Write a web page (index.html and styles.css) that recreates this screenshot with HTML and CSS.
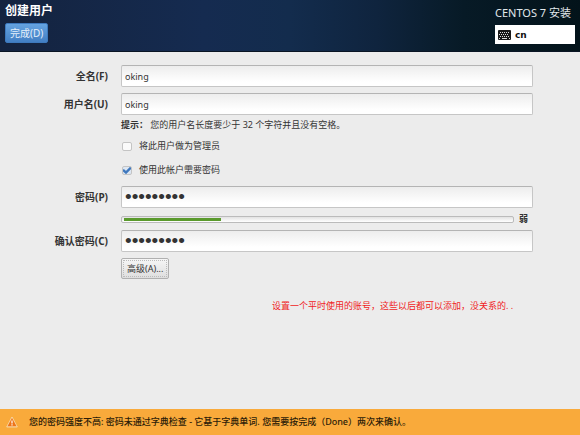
FILE: index.html
```html
<!DOCTYPE html>
<html lang="zh-CN">
<head>
    <meta charset="utf-8">
    <meta name="viewport" content="width=device-width, initial-scale=1">
    <title>创建用户</title>
    <link rel="stylesheet" href="styles.css">
</head>

<body>
    <header class="header">
        <div class="header-side">
            <h1>创建用户</h1>
            <button type="button" class="done">完成(D)</button>
        </div>
        <div class="header-side product">
            <span>CENTOS 7 安装</span>
            <button type="button" class="keyboard">
                <svg width="13" height="10" viewBox="0 0 13 10" aria-hidden="true">
                    <rect width="13" height="10" rx="1" fill="#1a1a1a"/>
                    <path d="M2 2.500h10M1 4.500h10M2 6.500h10" stroke="#ddd" stroke-dasharray="1 1"/>
                    <path d="M1 8.500h1M4 8.500h5M11 8.500h1" stroke="#ddd"/>
                </svg>
                cn
            </button>
        </div>
    </header>

    <main>
        <form class="form" action="#">
            <label class="name" for="fullname">全名(F)</label>
            <input type="text" class="entry" id="fullname" value="oking">

            <label class="name" for="username">用户名(U)</label>
            <input type="text" class="entry" id="username" value="oking">

            <p class="hint"><b>提示：</b> 您的用户名长度要少于 32 个字符并且没有空格。</p>

            <label class="check"><input type="checkbox">将此用户做为管理员</label>
            <label class="check"><input type="checkbox" checked>使用此帐户需要密码</label>

            <label class="name" for="psw">密码(P)</label>
            <input type="password" class="entry" id="psw" value="centos777">

            <div class="strength">
                <div class="bar"><div class="level" style="width: 25%"></div></div>
                <b>弱</b>
            </div>

            <label class="name" for="confirm">确认密码(C)</label>
            <input type="password" class="entry" id="confirm" value="centos777">

            <button type="button" class="advanced">高级(A)...</button>
        </form>

        <p class="note">设置一个平时使用的账号，这些以后都可以添加，没关系的. .</p>
    </main>

    <footer class="warning">
        <svg width="12" height="12" viewBox="0 0 12 12" aria-hidden="true">
            <path d="M6 1L11.300 11H.7z" fill="#f6d3a0" stroke="#f6d3a0" stroke-linejoin="round"/>
            <path d="M6 2L10.500 10.300H1.500z" fill="#ee7417"/>
            <path d="M6 4.500v3M6 8.300v1.200" stroke="#fff" stroke-width="1.200"/>
        </svg>
        <span>您的密码强度不高: 密码未通过字典检查 - 它基于字典单词. 您需要按完成（Done）两次来确认。</span>
    </footer>
</body>
</html>
```
FILE: styles.css
```css
* {
    box-sizing: border-box;
}

body {
    margin: 0;
    min-height: 100vh;
    display: flex;
    flex-direction: column;
    background: #ececec;
    color: #333;
    font-family: "Noto Sans", "Noto Sans CJK SC", sans-serif;
    font-size: 9px;
    line-height: 14px;
}

h1, p {
    margin: 0;
}

button, input {
    font: inherit;
    color: inherit;
}

/* Header */
.header {
    display: flex;
    justify-content: space-between;
    height: 52px;
    padding: 4px 5px;
    color: #fff;
    background: linear-gradient(90deg, #14233f 0%, #152b50 35%, #132c4d 50%, #0f243e 65%, #071a26 80%, #03131a 100%);
    border-bottom: 1px solid #0a1524;
}

.header-side {
    display: flex;
    flex-direction: column;
    align-items: flex-start;
    gap: 5px;
}

h1 {
    font-size: 12px;
    line-height: 14px;
}

.done {
    height: 20px;
    padding: 0 4px;
    border: 1px solid #3d79bd;
    border-radius: 2px;
    background: linear-gradient(#65a3e0, #427fc4);
    color: #e4effa;
    font-size: 10px;
    line-height: 18px;
}

.product {
    min-width: 80px;
    font-size: 11px;
    line-height: 18px;
    color: #e2e8ec;
    gap: 3px;
}

.keyboard {
    display: flex;
    align-items: center;
    gap: 4px;
    width: 100%;
    height: 19px;
    padding: 0 3px;
    border: 0;
    background: #fff;
    color: #111;
    font-family: "DejaVu Sans", sans-serif;
    font-size: 9px;
    font-weight: bold;
}

/* Form */
main {
    flex: 1;
    padding: 13px 47px 0 0;
}

.form {
    display: grid;
    grid-template-columns: 108px 1fr;
    column-gap: 13px;
    align-items: center;
}

.name {
    margin-bottom: 6px;
    font-size: 10px;
    font-weight: bold;
    text-align: right;
}

.entry {
    width: 100%;
    height: 22px;
    margin-bottom: 6px;
    padding: 0 3px;
    border: 1px solid #c6c6c6;
    border-top-color: #b4b4b4;
    border-radius: 2px;
    background: linear-gradient(#ededed, #fff 80%);
}

.entry[type=password] {
    font-family: "Liberation Sans", sans-serif;
    font-size: 19px;
}

.hint, .check, .strength, .advanced {
    grid-column: 2;
}

.hint {
    margin: -3px 0 2px;
}

.check {
    display: flex;
    align-items: center;
    gap: 7px;
    height: 24px;
    padding-left: 1px;
}

.check:has(:checked) {
    margin-bottom: 4px;
}

.check input {
    appearance: none;
    width: 10px;
    height: 9px;
    margin: 0;
    border: 1px solid #c4c4c4;
    border-radius: 2px;
    background: #fafafa;
}

/* Blue tick */
.check input:checked {
    background: url('data:image/svg+xml,<svg xmlns="http://www.w3.org/2000/svg" viewBox="0 0 10 8"><path d="M1 3.500L4 6.500L9 1" fill="none" stroke="%233f78bd" stroke-width="2.400"/></svg>') center / 10px 8px no-repeat border-box #dce6f2;
}

.strength {
    display: flex;
    align-items: center;
    gap: 5px;
    height: 14px;
    margin: -2px 5px 4px 0;
}

.bar {
    flex: 1;
    height: 7px;
    padding: 1px 2px;
    border: 1px solid #bbb;
    border-radius: 2px;
    background: linear-gradient(#e2e2e2, #fff);
}

.level {
    height: 3px;
    background: #5a9a2c;
}

.advanced {
    justify-self: start;
    height: 21px;
    padding: 0 5px;
    border: 1px solid #b0b0b0;
    border-radius: 2px;
    background: linear-gradient(#f6f6f6, #dedede);
    outline: 1px dotted #bbb;
    outline-offset: -3px;
}

.note {
    margin-top: 20px;
    padding-left: 272px;
    color: #f01c24;
    white-space: nowrap;
}

/* Warning bar */
.warning {
    display: flex;
    align-items: center;
    gap: 11px;
    min-height: 26px;
    padding: 0 6px;
    background: #f9aa3b;
    color: #2c1c08;
    font-weight: 500;
}
```
